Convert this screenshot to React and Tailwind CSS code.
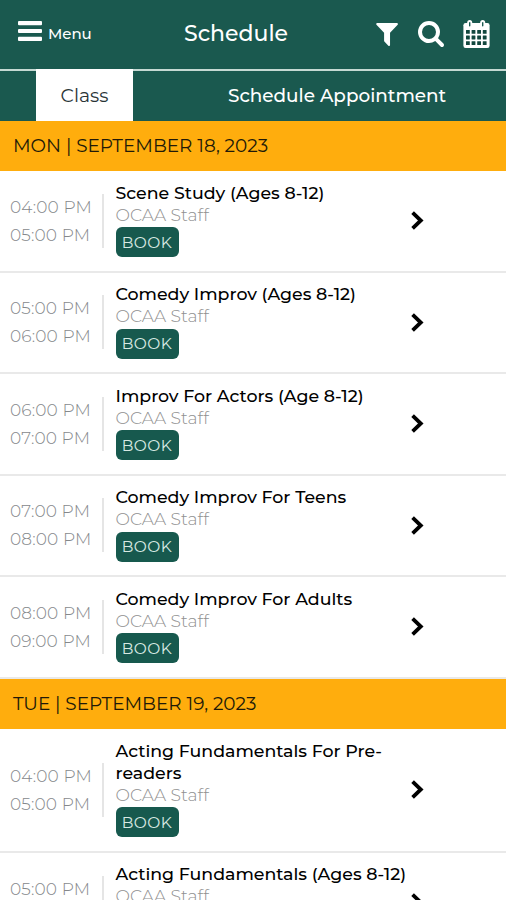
import React from 'react';

const days = [
  {
    label: 'MON | SEPTEMBER 18, 2023',
    classes: [
      { start: '04:00 PM', end: '05:00 PM', title: ['Scene Study (Ages 8-12)'] },
      { start: '05:00 PM', end: '06:00 PM', title: ['Comedy Improv (Ages 8-12)'] },
      { start: '06:00 PM', end: '07:00 PM', title: ['Improv For Actors (Age 8-12)'] },
      { start: '07:00 PM', end: '08:00 PM', title: ['Comedy Improv For Teens'] },
      { start: '08:00 PM', end: '09:00 PM', title: ['Comedy Improv For Adults'] },
    ],
  },
  {
    label: 'TUE | SEPTEMBER 19, 2023',
    classes: [
      { start: '04:00 PM', end: '05:00 PM', title: ['Acting Fundamentals For Pre-', 'readers'] },
      { start: '05:00 PM', end: '06:00 PM', title: ['Acting Fundamentals (Ages 8-12)'] },
    ],
  },
];

const FilterIcon = () => (
  <svg className="w-[22px] h-[23px]" viewBox="182 256 1420 1408" preserveAspectRatio="none" fill="currentColor">
    <path d="M1595 295q17 41-14 70l-493 493v742q0 42-39 59-13 5-25 5-27 0-45-19l-256-256q-19-19-19-45v-486l-493-493q-31-29-14-70 17-39 59-39h1280q42 0 59 39z" />
  </svg>
);

const SearchIcon = () => (
  <svg className="w-[26px] h-[26px]" viewBox="64 128 1664 1664" fill="currentColor">
    <path d="M1216 832q0-185-131.5-316.5t-316.5-131.5-316.5 131.5-131.5 316.5 131.5 316.5 316.5 131.5 316.5-131.5 131.5-316.5zm512 832q0 52-38 90t-90 38q-54 0-90-38l-343-342q-179 124-399 124-143 0-273.5-55.5t-225-150-150-225-55.5-273.5 55.5-273.5 150-225 225-150 273.5-55.5 273.5 55.5 225 150 150 225 55.5 273.5q0 220-124 399l343 343q37 37 37 90z" />
  </svg>
);

const CalendarIcon = () => (
  <svg className="w-[27px] h-[28px]" viewBox="0 0 27 28">
    <rect x="0.4" y="3" width="26.2" height="25" rx="2.2" fill="currentColor" />
    <rect x="4.2" y="0" width="5" height="8" rx="2.5" fill="currentColor" />
    <rect x="17.2" y="0" width="5" height="8" rx="2.5" fill="currentColor" />
    <rect x="6" y="2" width="1.4" height="4.5" rx="0.7" fill="#1a594f" />
    <rect x="19" y="2" width="1.4" height="4.5" rx="0.7" fill="#1a594f" />
    {[10, 15.6, 21.2].map((y) =>
      [3, 8.6, 14.2, 19.8].map((x) => (
        <rect key={`${x}-${y}`} x={x} y={y} width="3.8" height="3.8" rx="0.3" fill="#12473e" />
      ))
    )}
  </svg>
);

const Header = () => (
  <header className="h-[71px] shrink-0 flex bg-[#1a594f] border-b-2 border-[#c5d9d3] text-white">
    <button className="w-[184px] pl-[18px] flex items-center">
      <svg className="w-6 h-5 mt-[-7px]" viewBox="0 0 24 20" fill="currentColor">
        <rect width="24" height="4.2" rx="1" />
        <rect y="7.9" width="24" height="4.2" rx="1" />
        <rect y="15.8" width="24" height="4.2" rx="1" />
      </svg>
      <span className="ml-[6px] text-[15px] font-medium tracking-[-0.05px]">Menu</span>
    </button>
    <h1 className="w-[192px] pb-[3px] flex items-center text-[22px] font-medium">Schedule</h1>
    <div className="flex items-center pb-[1px]">
      <FilterIcon />
      <div className="ml-[20px]"><SearchIcon /></div>
      <div className="ml-[19px] mt-[-1px]"><CalendarIcon /></div>
    </div>
  </header>
);

const Tabs = () => (
  <nav className="h-[49.5px] shrink-0 flex bg-[#1a594f] pl-9 text-white">
    <button className="w-[97px] bg-white text-[#293437] text-[18.8px] mt-[-2px] pt-[2px]">Class</button>
    <button className="ml-[95px] pt-px text-[18.4px] font-medium whitespace-nowrap">Schedule Appointment</button>
  </nav>
);

const ClassRow = ({ item }) => (
  <div className={`shrink-0 flex border-b-2 border-[#e9e9e9] ${item.title.length > 1 ? 'h-[123.8px]' : 'h-[101.5px]'}`}>
    <div className="w-[104px] pl-[10px] flex items-center">
      <div className="w-full h-[54px] flex flex-col justify-center border-r-2 border-[#e5e5e5] text-[17px] leading-7 font-light tracking-[0.15px] text-[#85888b] whitespace-nowrap">
        <span>{item.start}</span>
        <span>{item.end}</span>
      </div>
    </div>
    <div className="w-[294px] pl-[11.5px] pt-[10.5px]">
      {item.title.map((line) => (
        <h3 key={line} className="text-[17.4px] leading-[22px] font-medium text-black whitespace-nowrap">{line}</h3>
      ))}
      <p className="text-[17.2px] leading-[22px] font-light text-[#909090]">OCAA Staff</p>
      <button className="mt-[1.5px] w-[63px] h-[30px] pt-px flex items-center justify-center rounded-md bg-[#17594e] text-[15.5px] tracking-[0.5px] text-[#d8e9e3]">BOOK</button>
    </div>
    <div className="flex items-center pl-[13px]">
      <svg className="w-[13px] h-[19px]" viewBox="0 0 13 19" fill="none" stroke="black" strokeWidth="3.8">
        <path d="M1.6 1.7 9.8 9.5 1.6 17.3" />
      </svg>
    </div>
  </div>
);

const App = () => (
  <div className="w-[506px] h-[900px] overflow-hidden flex flex-col bg-white font-['Montserrat','Inter',sans-serif]">
    <Header />
    <Tabs />
    {days.map((day) => (
      <React.Fragment key={day.label}>
        <h2 className="h-[50.5px] shrink-0 pl-[13px] flex items-center bg-[#ffad0d] text-[18.45px] text-[#211908] whitespace-nowrap">
          {day.label}
        </h2>
        {day.classes.map((item) => (
          <ClassRow key={item.title[0]} item={item} />
        ))}
      </React.Fragment>
    ))}
  </div>
);

export default App;
